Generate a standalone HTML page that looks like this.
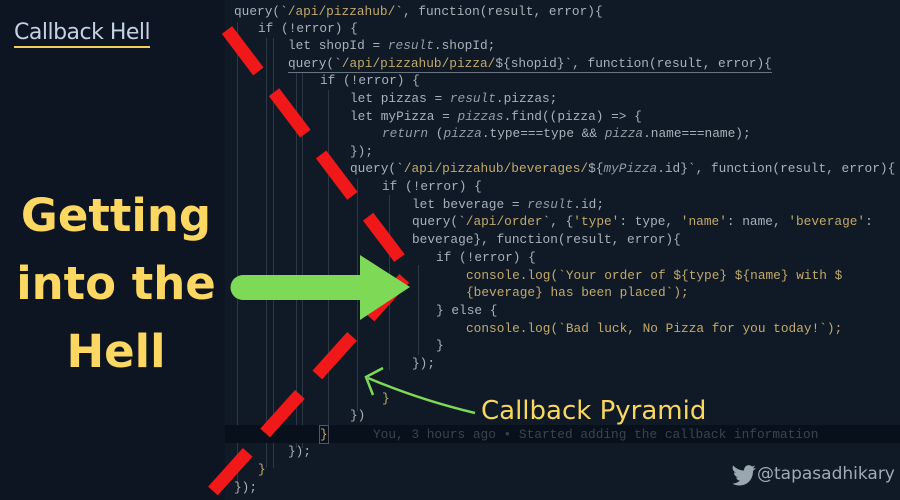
<!DOCTYPE html>
<html><head><meta charset="utf-8"><style>
body{margin:0;width:900px;height:500px;overflow:hidden;background:#0c1521;position:relative;font-family:"Liberation Sans",sans-serif}
.code{position:absolute;left:0;top:0;font-family:"Liberation Mono",monospace;font-size:12.8px;color:#a9b1b8;white-space:pre}
.code div{position:absolute;height:17px;line-height:17px}
.s{color:#c3a96a}.i{font-style:italic;color:#939ba3}
.g{position:absolute;width:1px;background:#2c3845}
</style></head><body>
<div style="position:absolute;left:225px;top:0;width:675px;height:500px;background:#0f1a26"></div>
<div class="g" style="left:237px;top:22px;height:460px"></div>
<div class="g" style="left:266px;top:38px;height:430px"></div>
<div class="g" style="left:273px;top:38px;height:430px"></div>
<div class="g" style="left:296px;top:73px;height:375px"></div>
<div class="g" style="left:302px;top:73px;height:375px"></div>
<div class="g" style="left:328px;top:90px;height:350px"></div>
<div class="g" style="left:357px;top:178px;height:233px"></div>
<div class="g" style="left:389px;top:195px;height:175px"></div>
<div class="g" style="left:418px;top:265px;height:90px"></div>
<div style="position:absolute;left:225px;top:425px;width:675px;height:18px;background:#08111b"></div>
<div class="code">
<div style="left:234px;top:3px">query(`<span class="s">/api/pizzahub/</span>`, function(result, error){</div>
<div style="left:258px;top:20px">if (!error) {</div>
<div style="left:288px;top:37px">let shopId = <span class="i">result</span>.shopId;</div>
<div style="left:288px;top:55px;border-bottom:1px solid #6a7480">query(`<span class="s">/api/pizzahub/pizza/</span>${shopid}`, function(result, error){</div>
<div style="left:320px;top:72px">if (!error) {</div>
<div style="left:350px;top:90px">let pizzas = <span class="i">result</span>.pizzas;</div>
<div style="left:350px;top:108px">let myPizza = <span class="i">pizzas</span>.find((pizza) =&gt; {</div>
<div style="left:382px;top:125px"><span class="i">return</span> (<span class="i">pizza</span>.type===type &amp;&amp; <span class="i">pizza</span>.name===name);</div>
<div style="left:350px;top:143px">});</div>
<div style="left:350px;top:160px">query(`<span class="s">/api/pizzahub/beverages/</span>${<span class="i">myPizza</span>.id}`, function(result, error){</div>
<div style="left:382px;top:178px">if (!error) {</div>
<div style="left:412px;top:196px">let beverage = <span class="i">result</span>.id;</div>
<div style="left:412px;top:213px">query(`<span class="s">/api/order</span>`, {<span class="s">'type'</span>: type, <span class="s">'name'</span>: name, <span class="s">'beverage'</span>:</div>
<div style="left:412px;top:231px">beverage}, function(result, error){</div>
<div style="left:436px;top:249px">if (!error) {</div>
<div style="left:466px;top:267px"><span class="s">console.log(`Your order of ${type} ${name} with $</span></div>
<div style="left:466px;top:284px"><span class="s">{beverage} has been placed`);</span></div>
<div style="left:436px;top:302px">} else {</div>
<div style="left:466px;top:320px"><span class="s">console.log(`Bad luck, No Pizza for you today!`);</span></div>
<div style="left:436px;top:337px">}</div>
<div style="left:412px;top:355px">});</div>
<div style="left:382px;top:390px;color:#c3a96a">}</div>
<div style="left:350px;top:407px">})</div>
<div style="left:320px;top:426px;color:#c3a96a;outline:1px solid #556">}</div>
<div style="left:373px;top:426px;color:#3a4450">You, 3 hours ago • Started adding the callback information</div>
<div style="left:288px;top:443px">});</div>
<div style="left:258px;top:461px;color:#c3a96a">}</div>
<div style="left:234px;top:479px">});</div>
</div>
<svg width="900" height="500" style="position:absolute;left:0;top:0">
<path d="M227,30 L410,272 L212,492" stroke="#f01818" stroke-width="13" fill="none" stroke-dasharray="52,26"/>
<path d="M243,275 H360 V255 L410,287 L360,320 V300 H243 A12.5,12.5 0 0 1 243,275Z" fill="#7ed957"/>
<path d="M475,413 Q420,400 368,378" stroke="#7ed957" stroke-width="2.5" fill="none"/>
<path d="M373,395 L366,377 L383,368" stroke="#7ed957" stroke-width="2.5" fill="none"/>
<path d="M733,484 c8,4 20,0 20,-13 l3,-3 l-3,0.5 l2,-3 l-3,1 c-3,-3 -8,-1 -8,4 c-5,0 -9,-3 -11,-5 c-1,3 0,6 3,7 l-2,0 c0,3 2,4 4,5 l-2,0 c1,2 2,3 4,3 c-2,2 -5,3 -7,3z" fill="#9aa6b0"/>
</svg>
<div style="position:absolute;left:481px;top:396px;font-size:26px;color:#f9d65f;font-family:'DejaVu Sans',sans-serif">Callback Pyramid</div>
<div style="position:absolute;left:757px;top:464px;font-size:17px;color:#a0aab4;font-family:'DejaVu Sans',sans-serif">@tapasadhikary</div>
<div style="position:absolute;left:14px;top:20px;font-size:22px;color:#c4d0e4;font-family:'DejaVu Sans',sans-serif;letter-spacing:-0.5px;border-bottom:2px solid #f1cf5e;line-height:26px">Callback Hell</div>
<div style="position:absolute;left:0;top:182px;width:232px;text-align:center;font-size:45px;font-weight:bold;color:#fcd862;line-height:68px;font-family:'DejaVu Sans',sans-serif">Getting<br>into the<br>Hell</div>
</body></html>
